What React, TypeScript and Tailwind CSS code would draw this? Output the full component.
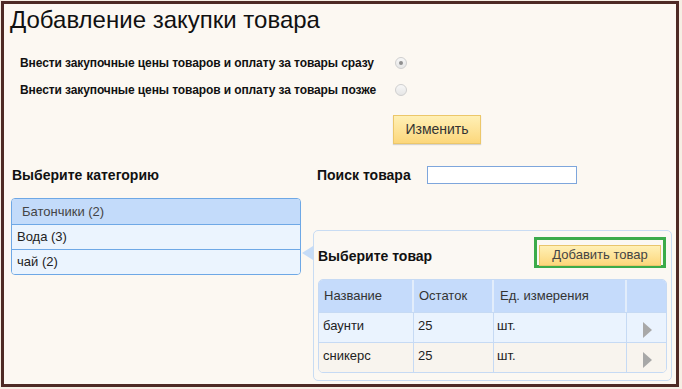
import React from "react"

const font = { fontFamily: '"Liberation Sans", Arial, sans-serif' }

const Radio = ({ checked }: { checked?: boolean }) => (
    <span className="w-[12px] h-[12px] rounded-full border border-[#cfcfcf] bg-gradient-to-b from-[#f7f7f7] to-[#e6e6e6] flex items-center justify-center">
        {checked && <span className="w-[4px] h-[4px] rounded-full bg-[#8f8f8f]"></span>}
    </span>
)

const Play = () => (
    <svg width="9" height="16" viewBox="0 0 9 16">
        <polygon points="0,0 9,8 0,16" fill="#a8a8a8" />
    </svg>
)

const categories = [
    { name: "Батончики (2)", active: true },
    { name: "Вода (3)", active: false },
    { name: "чай (2)", active: false },
]

const products = [
    { name: "баунти", left: "25", unit: "шт.", bg: "bg-[#eaf3fe]" },
    { name: "сникерс", left: "25", unit: "шт.", bg: "bg-[#f8f4ee]" },
]

export default function App() {
    return (
        <div className="w-[682px] h-[389px] bg-[#f6eee4] pt-[1px] pl-[1px]" style={font}>
            <div className="w-[678px] h-[386px] border-[3px] border-[#4e2a25] bg-[#fcf8f2] flex flex-col">

                <h1 className="mt-[2px] ml-[6px] text-[24px] leading-[28px] text-[#111]">Добавление закупки товара</h1>

                <div className="mt-[15px] ml-[16px] flex flex-col text-[12px] font-bold text-[#111] tracking-[-0.1px]">
                    <div className="h-[27px] flex items-center">
                        <span className="w-[375px]">Внести закупочные цены товаров и оплату за товары сразу</span>
                        <Radio checked />
                    </div>
                    <div className="h-[27px] flex items-center">
                        <span className="w-[375px]">Внести закупочные цены товаров и оплату за товары позже</span>
                        <Radio />
                    </div>
                </div>

                <button className="mt-[12px] ml-[389px] w-[88px] h-[29px] border border-[#ecc76a] bg-gradient-to-b from-[#fff0b5] to-[#fcd77b] text-[14px] text-[#333] shadow-[0_1px_1px_rgba(0,0,0,0.15)]">
                    Изменить
                </button>

                <div className="mt-[21px] h-[20px] flex items-center text-[14px] font-bold leading-[18px] text-[#111]">
                    <span className="ml-[8px] w-[305px]">Выберите категорию</span>
                    <span className="w-[110px]">Поиск товара</span>
                    <input className="w-[150px] h-[18px] border border-[#7ea6dc] bg-white outline-none" />
                </div>

                <div className="mt-[13px] flex items-start">
                    <div className="ml-[7px] w-[290px] rounded-[4px] border border-[#6ea8e6] overflow-hidden text-[13px] leading-[16px]">
                        {categories.map((c, index) => (
                            <div
                                key={index}
                                className={`h-[25px] flex items-center ${index > 0 ? 'border-t border-[#6ea8e6]' : ''} ${c.active ? 'bg-[#c3dbfa] pl-[10px] text-[#444]' : 'bg-[#ebf4fe] pl-[5px] text-[#222]'}`}
                            >
                                {c.name}
                            </div>
                        ))}
                    </div>

                    <div className="relative mt-[32px] ml-[12px] w-[359px] h-[151px] rounded-[5px] border border-[#c8dcf3] bg-[#fbf8f3] flex flex-col">
                        <svg className="absolute left-[-12px] top-[15px]" width="11" height="14" viewBox="0 0 11 14">
                            <polygon points="0,7 11,0 11,14" fill="#c6dcf7" />
                        </svg>

                        <div className="mt-[6px] h-[31px] flex justify-between pl-[4px] pr-[5px]">
                            <span className="self-end mb-[3px] text-[14px] leading-[18px] font-bold text-[#111]">Выберите товар</span>
                            <div className="w-[132px] h-[31px] border-[3px] border-[#3bab4a] p-[2px]">
                                <button className="w-full h-full border border-[#e9c56c] bg-gradient-to-b from-[#fff0b5] to-[#fcd77b] text-[13px] leading-[16px] text-[#444]">
                                    Добавить товар
                                </button>
                            </div>
                        </div>

                        <div className="mt-[11px] ml-[4px] w-[349px] rounded-[5px] border border-[#c6daf4] overflow-hidden text-[13px] leading-[16px] text-[#222]">
                            <div className="h-[32px] flex bg-[#c5dbfb] text-[#333]">
                                <div className="w-[95px] pl-[5px] flex items-center border-r-2 border-[#e2edfb]">Название</div>
                                <div className="w-[80px] pl-[5px] flex items-center border-r-2 border-[#e2edfb]">Остаток</div>
                                <div className="w-[133px] pl-[6px] flex items-center border-r-2 border-[#e2edfb]">Ед. измерения</div>
                                <div className="flex-1"></div>
                            </div>
                            {products.map((p, index) => (
                                <div key={index} className={`h-[30px] flex border-t border-[#c6daf4] ${p.bg}`}>
                                    <div className="w-[95px] pl-[4px] pt-[5px] border-r border-[#c6daf4]">{p.name}</div>
                                    <div className="w-[80px] pl-[4px] pt-[5px] border-r border-[#c6daf4]">{p.left}</div>
                                    <div className="w-[133px] pl-[3px] pt-[5px] border-r border-[#c6daf4]">{p.unit}</div>
                                    <div className="flex-1 flex justify-center pt-[9px] pl-[2px]"><Play /></div>
                                </div>
                            ))}
                        </div>
                    </div>
                </div>
            </div>
        </div>
    )
}
